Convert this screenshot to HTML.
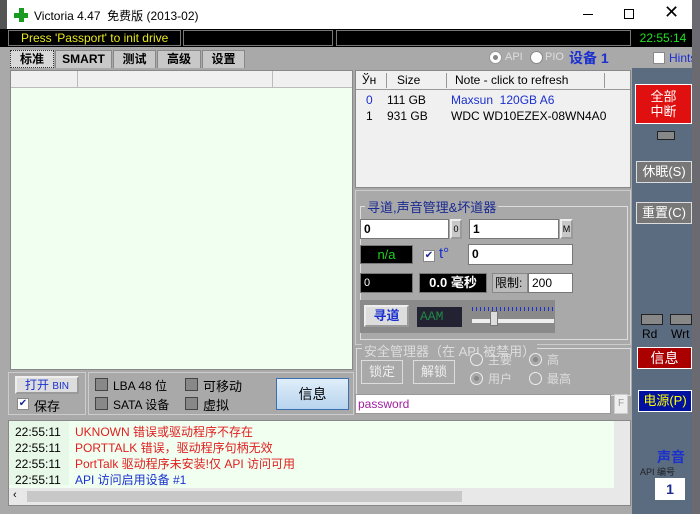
<!DOCTYPE html>
<html><head><meta charset="utf-8"><style>
*{box-sizing:border-box;margin:0;padding:0}
body{width:700px;height:514px;overflow:hidden;background:#3a3f48;font-family:"Liberation Sans","Noto Sans CJK SC",sans-serif;font-size:12px;position:relative}
.a{position:absolute}
.win{left:0;top:0;width:693px;height:514px;background:#a9a9a9;border-right:1px solid #3a7fd0}
.title{left:0;top:0;width:692px;height:30px;background:#fff}
.blk{background:#000;border:1px solid #777}
.tab{top:50px;height:18px;background:#c8c8c8;border:1px solid #888;border-bottom:none;font-weight:bold;font-size:12px;text-align:center;line-height:17px}
.btn{background:#c8c8c8;border:2px outset #eee;text-align:center}
.inp{background:#fff;border:1px solid #777;padding-left:3px;font-weight:bold;font-size:12px;line-height:18px}
.chk{width:13px;height:13px;background:#888;border:1px solid #444}
.rad{width:13px;height:13px;border-radius:50%;background:#fff;border:1px solid #888}
.rb{border:1px solid #ddd;color:#eee}
.log div{height:16px;line-height:16px;font-size:12px}
</style></head><body>
<div class="a win"></div>
<div class="a title">
 <div class="a" style="left:0;top:0;width:7px;height:30px;background:#555"></div>
 <div class="a" style="left:14px;top:8px;width:14px;height:14px"><div class="a" style="left:5px;top:0;width:5px;height:14px;background:#1a9a20"></div><div class="a" style="left:0;top:5px;width:14px;height:5px;background:#1a9a20"></div></div>
 <div class="a" style="left:34px;top:7px;font-size:12px">Victoria 4.47&nbsp; 免费版 (2013-02)</div>
 <div class="a" style="left:583px;top:14px;width:10px;height:1px;background:#000"></div>
 <div class="a" style="left:624px;top:9px;width:10px;height:10px;border:1px solid #000"></div>
 <div class="a" style="left:664px;top:2px;font-size:18px;color:#000">✕</div>
</div>
<div class="a" style="left:0;top:29px;width:692px;height:18px;background:#000"></div>
<div class="a blk" style="left:8px;top:30px;width:173px;height:16px;color:#e8e820;font-size:12px;line-height:14px;padding-left:12px">Press 'Passport' to init drive</div>
<div class="a blk" style="left:183px;top:30px;width:150px;height:16px"></div>
<div class="a blk" style="left:336px;top:30px;width:295px;height:16px"></div>
<div class="a" style="left:634px;top:30px;width:58px;height:16px;color:#20e020;font-size:12px;line-height:16px;text-align:center">22:55:14</div>
<div class="a" style="left:632px;top:68px;width:60px;height:446px;background:#5b6b80"></div>
<div class="a tab" style="left:10px;width:44px;background:#d8d8d8;border:1px dotted #333">标准</div>
<div class="a tab" style="left:55px;width:57px">SMART</div>
<div class="a tab" style="left:113px;width:43px">测试</div>
<div class="a tab" style="left:157px;width:44px">高级</div>
<div class="a tab" style="left:202px;width:43px">设置</div>
<div class="a rad" style="left:489px;top:51px;border-color:#999"><div class="a" style="left:3px;top:3px;width:5px;height:5px;border-radius:50%;background:#888"></div></div>
<div class="a" style="left:505px;top:51px;color:#ddd;font-size:11px">API</div>
<div class="a rad" style="left:530px;top:51px"></div>
<div class="a" style="left:545px;top:51px;color:#ddd;font-size:11px">PIO</div>
<div class="a" style="left:569px;top:48px;color:#1a30d0;font-weight:bold;font-size:14px">设备 1</div>
<div class="a" style="left:653px;top:52px;width:12px;height:12px;background:#fff;border:1px solid #888"></div>
<div class="a" style="left:669px;top:51px;color:#1a30d0;font-size:12px">Hints</div>
<div class="a" style="left:10px;top:70px;width:343px;height:300px;background:#f0fff0;border:1px solid #888"></div>
<div class="a" style="left:11px;top:71px;width:341px;height:17px;background:#f0f0f0;border-bottom:1px solid #bbb"></div>
<div class="a" style="left:77px;top:71px;width:1px;height:17px;background:#bbb"></div>
<div class="a" style="left:272px;top:71px;width:1px;height:17px;background:#bbb"></div>
<div class="a" style="left:355px;top:70px;width:276px;height:118px;background:#f0f0f0;border:1px solid #888"></div>
<div class="a" style="left:356px;top:71px;width:274px;height:19px;border-bottom:1px solid #999;font-size:12px;line-height:19px">
 <span class="a" style="left:6px">Ўн</span><span class="a" style="left:41px">Size</span><span class="a" style="left:99px">Note - click to refresh</span>
 <span class="a" style="left:30px;top:2px;width:1px;height:15px;background:#999"></span><span class="a" style="left:90px;top:2px;width:1px;height:15px;background:#999"></span><span class="a" style="left:248px;top:2px;width:1px;height:15px;background:#999"></span></div>
<div class="a" style="left:366px;top:93px;color:#1a30d0">0</div><div class="a" style="left:387px;top:93px">111 GB</div><div class="a" style="left:451px;top:93px;color:#1a30d0">Maxsun&nbsp; 120GB A6</div>
<div class="a" style="left:366px;top:109px">1</div><div class="a" style="left:387px;top:109px">931 GB</div><div class="a" style="left:451px;top:109px">WDC WD10EZEX-08WN4A0</div>
<div class="a" style="left:355px;top:190px;width:276px;height:155px;background:#a9a9a9;border:1px solid #ccc"></div>
<div class="a" style="left:360px;top:206px;width:268px;height:134px;border:1px solid #ddd"></div>
<div class="a" style="left:365px;top:197px;background:#a9a9a9;color:#1a2a90;font-size:13px;padding:0 2px">寻道,声音管理&amp;坏道器</div>
<div class="a inp" style="left:360px;top:219px;width:89px;height:20px">0</div>
<div class="a btn" style="left:450px;top:219px;width:12px;height:20px;font-size:9px;line-height:16px">0</div>
<div class="a inp" style="left:469px;top:219px;width:90px;height:20px">1</div>
<div class="a btn" style="left:560px;top:219px;width:13px;height:20px;font-size:9px;line-height:16px">M</div>
<div class="a blk" style="left:360px;top:245px;width:53px;height:19px;color:#20d020;text-align:center;font-size:13px;line-height:17px">n/a</div>
<div class="a" style="left:423px;top:250px;width:12px;height:12px;background:#fff;border:1px solid #888;color:#1a2a90;font-size:10px;line-height:10px;text-align:center">✔</div>
<div class="a" style="left:439px;top:245px;color:#1a30d0;font-size:15px">t°</div>
<div class="a inp" style="left:468px;top:244px;width:105px;height:21px">0</div>
<div class="a blk" style="left:360px;top:273px;width:53px;height:20px;color:#fff;font-size:11px;padding-left:3px;line-height:18px">0</div>
<div class="a blk" style="left:419px;top:273px;width:68px;height:20px;color:#fff;font-weight:bold;font-size:13px;text-align:center;line-height:18px">0.0 毫秒</div>
<div class="a" style="left:492px;top:273px;width:36px;height:20px;background:#bbb;border:1px solid #888;font-size:12px;line-height:18px;padding-left:2px">限制:</div>
<div class="a inp" style="left:528px;top:273px;width:45px;height:20px;font-weight:normal">200</div>
<div class="a" style="left:360px;top:300px;width:195px;height:33px;background:#8a8a8a"></div>
<div class="a btn" style="left:364px;top:305px;width:45px;height:22px;color:#1a30d0;font-weight:bold;font-size:13px;line-height:18px;background:#ddd">寻道</div>
<div class="a" style="left:417px;top:307px;width:45px;height:20px;background:#223;color:#284;font-size:13px;padding-left:3px;line-height:20px;font-family:'Liberation Mono',monospace">AAM</div>
<div class="a" style="left:472px;top:307px;width:82px;height:4px;background:repeating-linear-gradient(90deg,#1a30d0 0 1px,transparent 1px 4px)"></div>
<div class="a" style="left:472px;top:319px;width:82px;height:4px;background:#eee"></div>
<div class="a" style="left:490px;top:311px;width:8px;height:15px;background:#ddd;border:1px solid #777"></div>
<div class="a" style="left:356px;top:348px;width:275px;height:48px;border:1px solid #ddd"></div>
<div class="a" style="left:362px;top:341px;background:#a9a9a9;color:#ddd;font-size:13px;padding:0 2px">安全管理器（在 API 被禁用）</div>
<div class="a rb" style="left:361px;top:360px;width:42px;height:24px;text-align:center;line-height:22px;font-size:13px">锁定</div>
<div class="a rb" style="left:413px;top:360px;width:42px;height:24px;text-align:center;line-height:22px;font-size:13px">解锁</div>
<div class="a rad" style="left:470px;top:353px;background:#a9a9a9;border-color:#eee"></div><div class="a" style="left:488px;top:351px;color:#ddd;font-size:12px">主要</div>
<div class="a rad" style="left:529px;top:353px;background:#a9a9a9;border-color:#eee"><div class="a" style="left:3px;top:3px;width:5px;height:5px;border-radius:50%;background:#888"></div></div><div class="a" style="left:547px;top:351px;color:#ddd">高</div>
<div class="a rad" style="left:470px;top:372px;background:#a9a9a9;border-color:#eee"><div class="a" style="left:3px;top:3px;width:5px;height:5px;border-radius:50%;background:#888"></div></div><div class="a" style="left:488px;top:370px;color:#ddd">用户</div>
<div class="a rad" style="left:529px;top:372px;background:#a9a9a9;border-color:#eee"></div><div class="a" style="left:547px;top:370px;color:#ddd">最高</div>
<div class="a" style="left:355px;top:394px;width:256px;height:20px;background:#fff;border:1px solid #999;color:#a020a0;font-size:12px;line-height:18px;padding-left:2px">password</div>
<div class="a" style="left:614px;top:394px;width:14px;height:20px;background:#eee;border:1px solid #ccc;color:#999;font-size:10px;text-align:center;line-height:18px">F</div>
<div class="a" style="left:8px;top:372px;width:78px;height:43px;border:1px solid #ccc"></div>
<div class="a btn" style="left:15px;top:376px;width:64px;height:18px;color:#1a30d0;font-size:12px;line-height:14px;background:#ddd">打开 <span style="font-size:10px">BIN</span></div>
<div class="a" style="left:17px;top:398px;width:12px;height:12px;background:#fff;border:1px solid #888;color:#1a2a90;font-size:10px;line-height:10px;text-align:center">✔</div>
<div class="a" style="left:34px;top:396px;font-size:13px">保存</div>
<div class="a" style="left:88px;top:372px;width:266px;height:43px;border:1px solid #ccc"></div>
<div class="a chk" style="left:95px;top:378px"></div><div class="a" style="left:113px;top:377px;font-size:12px">LBA 48 位</div>
<div class="a chk" style="left:185px;top:378px"></div><div class="a" style="left:203px;top:376px;font-size:13px">可移动</div>
<div class="a chk" style="left:95px;top:397px"></div><div class="a" style="left:113px;top:396px;font-size:12px">SATA 设备</div>
<div class="a chk" style="left:185px;top:397px"></div><div class="a" style="left:203px;top:395px;font-size:13px">虚拟</div>
<div class="a" style="left:276px;top:378px;width:73px;height:32px;background:linear-gradient(#e0eefa,#b8d4ee);border:1px solid #3a70b0;text-align:center;line-height:30px;font-size:14px">信息</div>
<div class="a" style="left:8px;top:420px;width:623px;height:86px;background:#f0fff0;border:1px solid #888"></div>
<div class="a" style="left:9px;top:421px;width:60px;height:64px;background:#e8f8e8"></div>
<div class="a log" style="left:15px;top:424px"><div>22:55:11</div><div>22:55:11</div><div>22:55:11</div><div>22:55:11</div></div>
<div class="a log" style="left:75px;top:424px"><div style="color:#e02020">UKNOWN 错误或驱动程序不存在</div><div style="color:#e02020">PORTTALK 错误，驱动程序句柄无效</div><div style="color:#e02020">PortTalk 驱动程序未安装!仅 API 访问可用</div><div style="color:#1a30d0">API 访问启用设备 #1</div></div>
<div class="a" style="left:614px;top:421px;width:16px;height:84px;background:#e8e8e8"></div>
<div class="a" style="left:9px;top:488px;width:605px;height:17px;background:#e8e8e8"></div>
<div class="a" style="left:27px;top:491px;width:435px;height:11px;background:#c8c8c8"></div>
<div class="a" style="left:13px;top:489px;font-size:11px">‹</div>
<div class="a" style="left:635px;top:84px;width:57px;height:40px;background:#e01010;border:1px solid #fff;color:#fff;text-align:center;font-size:13px;line-height:15px;padding-top:4px">全部<br>中断</div>
<div class="a" style="left:657px;top:131px;width:18px;height:9px;background:#888;border:1px solid #222"></div>
<div class="a btn" style="left:636px;top:161px;width:56px;height:22px;background:#777;border:1px solid #ddd;color:#fff;font-size:13px;line-height:20px">休眠(S)</div>
<div class="a btn" style="left:636px;top:202px;width:56px;height:22px;background:#777;border:1px solid #ddd;color:#fff;font-size:13px;line-height:20px">重置(C)</div>
<div class="a" style="left:641px;top:314px;width:22px;height:11px;background:#888;border:1px solid #222"></div>
<div class="a" style="left:670px;top:314px;width:22px;height:11px;background:#888;border:1px solid #222"></div>
<div class="a" style="left:642px;top:327px;font-size:12px">Rd</div><div class="a" style="left:671px;top:327px;font-size:12px">Wrt</div>
<div class="a" style="left:637px;top:347px;width:55px;height:22px;background:#a00;border:1px solid #fff;color:#fff;text-align:center;font-size:14px;line-height:20px">信息</div>
<div class="a" style="left:638px;top:390px;width:54px;height:22px;background:#0010a0;border:1px solid #fff;color:#ff0;text-align:center;font-size:13px;line-height:20px">电源(P)</div>
<div class="a" style="left:657px;top:447px;color:#1a30d0;font-weight:bold;font-size:14px">声音</div>
<div class="a" style="left:640px;top:465px;color:#222;font-size:9px">API 编号</div>
<div class="a" style="left:655px;top:478px;width:30px;height:22px;background:#fff;color:#1a2a90;font-weight:bold;font-size:14px;text-align:center;line-height:22px">1</div>
<div class="a" style="left:692px;top:0;width:8px;height:514px;background:#6a6a70"></div>
</body></html>
